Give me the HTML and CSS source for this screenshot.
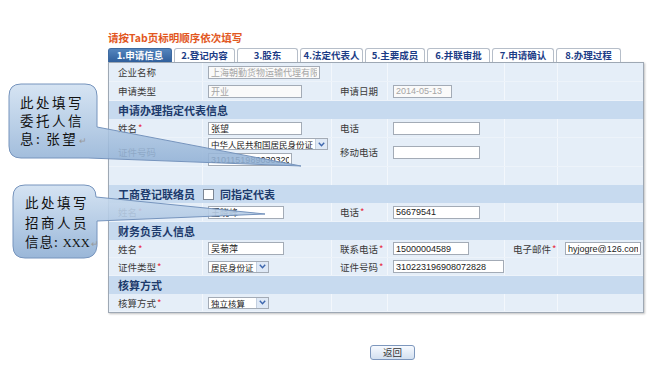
FILE: index.html
```html
<!DOCTYPE html>
<html>

<head>
    <meta charset="UTF-8">
    <meta name="viewport" content="width=device-width, initial-scale=1.0">
    <title>申请信息</title>
    <link rel="stylesheet" href="styles.css">
</head>

<body>

    <div class="page">
        <p class="tip">请按Tab页标明顺序依次填写</p>

        <div class="tabs">
            <a class="tab active w64">1.申请信息</a>
            <a class="tab w61">2.登记内容</a>
            <a class="tab w61">3.股东</a>
            <a class="tab w63">4.法定代表人</a>
            <a class="tab w60">5.主要成员</a>
            <a class="tab w63">6.并联审批</a>
            <a class="tab w62">7.申请确认</a>
            <a class="tab w65">8.办理过程</a>
        </div>

        <div class="panel">
            <div class="row">
                <div class="cell label">企业名称</div>
                <div class="cell"><input class="ipt w112 off" value="上海朝勤货物运输代理有限公司" disabled></div>
                <div class="cell"></div>
                <div class="cell"></div>
                <div class="cell"></div>
                <div class="cell"></div>
            </div>
            <div class="row">
                <div class="cell label">申请类型</div>
                <div class="cell"><input class="ipt w94 off" value="开业" disabled></div>
                <div class="cell label">申请日期</div>
                <div class="cell"><input class="ipt w59 off" value="2014-05-13" disabled></div>
                <div class="cell"></div>
                <div class="cell"></div>
            </div>

            <div class="head">申请办理指定代表信息</div>
            <div class="row">
                <div class="cell label">姓名<span class="req">*</span></div>
                <div class="cell"><input class="ipt w94" value="张望"></div>
                <div class="cell label">电话</div>
                <div class="cell"><input class="ipt w87" value=""></div>
                <div class="cell"></div>
                <div class="cell"></div>
            </div>
            <div class="row tall">
                <div class="cell label">证件号码</div>
                <div class="cell stack">
                    <div class="select w120 small"><span class="val">中华人民共和国居民身份证</span><span class="arrow"><svg width="7" height="5" viewBox="0 0 7 5"><path d="M0.8 0.8 L3.5 3.8 L6.2 0.8" fill="none" stroke="#3d66ad" stroke-width="1.4"/></svg></span></div>
                    <input class="ipt w84" value="310115198903032008">
                </div>
                <div class="cell label">移动电话</div>
                <div class="cell"><input class="ipt w87" value=""></div>
                <div class="cell"></div>
                <div class="cell"></div>
            </div>
            <div class="row gap">
                <div class="cell"></div>
                <div class="cell"></div>
                <div class="cell"></div>
                <div class="cell"></div>
                <div class="cell"></div>
                <div class="cell"></div>
            </div>

            <div class="head">工商登记联络员 <span class="check"></span> 同指定代表</div>
            <div class="row">
                <div class="cell label">姓名<span class="req">*</span></div>
                <div class="cell"><input class="ipt w76" value="王晓峰"></div>
                <div class="cell label">电话<span class="req">*</span></div>
                <div class="cell"><input class="ipt w87" value="56679541"></div>
                <div class="cell"></div>
                <div class="cell"></div>
            </div>

            <div class="head">财务负责人信息</div>
            <div class="row short">
                <div class="cell label">姓名<span class="req">*</span></div>
                <div class="cell"><input class="ipt w76" value="吴菊萍"></div>
                <div class="cell label">联系电话<span class="req">*</span></div>
                <div class="cell"><input class="ipt w76" value="15000004589"></div>
                <div class="cell label">电子邮件<span class="req">*</span></div>
                <div class="cell last"><input class="ipt w76" value="hyjogre@126.com"></div>
            </div>
            <div class="row short">
                <div class="cell label">证件类型<span class="req">*</span></div>
                <div class="cell">
                    <div class="select w61 small"><span class="val">居民身份证</span><span class="arrow"><svg width="7" height="5" viewBox="0 0 7 5"><path d="M0.8 0.8 L3.5 3.8 L6.2 0.8" fill="none" stroke="#3d66ad" stroke-width="1.4"/></svg></span></div>
                </div>
                <div class="cell label">证件号码<span class="req">*</span></div>
                <div class="cell"><input class="ipt w111" value="310223196908072828"></div>
                <div class="cell"></div>
                <div class="cell"></div>
            </div>

            <div class="head">核算方式</div>
            <div class="row short">
                <div class="cell label">核算方式<span class="req">*</span></div>
                <div class="cell">
                    <div class="select w61 small"><span class="val">独立核算</span><span class="arrow"><svg width="7" height="5" viewBox="0 0 7 5"><path d="M0.8 0.8 L3.5 3.8 L6.2 0.8" fill="none" stroke="#3d66ad" stroke-width="1.4"/></svg></span></div>
                </div>
                <div class="cell"></div>
                <div class="cell"></div>
                <div class="cell"></div>
                <div class="cell"></div>
            </div>
        </div>

        <div class="actions">
            <button class="btn">返回</button>
        </div>
    </div>

    <!-- callouts drawn over the form -->
    <svg class="callouts" width="650" height="371" viewBox="0 0 650 371">
        <defs>
            <linearGradient id="fill" x1="0" y1="0" x2="0" y2="1">
                <stop offset="0" stop-color="#d0e0f1"/>
                <stop offset="0.55" stop-color="#adc6e2"/>
                <stop offset="1" stop-color="#8fafd4"/>
            </linearGradient>
        </defs>
        <path d="M21 84 H85 Q97 84 97 96 V127 L301 166 L88 158 H21 Q9 158 9 146 V96 Q9 84 21 84 Z"
            fill="url(#fill)" fill-opacity="0.88" stroke="#7694bd" stroke-width="1"/>
        <path d="M25 185 H84 Q96 185 96 197 L265 214 L97 221 V246 Q96 258 84 258 H25 Q13 258 13 246 V197 Q13 185 25 185 Z"
            fill="url(#fill)" fill-opacity="0.9" stroke="#7694bd" stroke-width="1"/>
    </svg>

    <div class="note note1">此处填写<br>委托人信<br>息<span class="colon">:</span>张望<span class="mark">↵</span></div>
    <div class="note note2">此处填写<br>招商人员<br><span class="tight">信息<span class="colon">:</span></span><span class="xxx">XXX</span><span class="mark">↵</span></div>

</body>

</html>
```

FILE: styles.css
```css
body {
    margin: 0;
    background-color: #fff;
    font-family: "Liberation Sans", "Noto Sans CJK SC", sans-serif;
    position: relative;
    width: 650px;
    height: 371px;
    overflow: hidden;
}

.page {
    padding: 32px 0 0 108px;
}

.tip {
    margin: 0 0 4px 0;
    height: 12px;
    line-height: 12px;
    font-size: 10.5px;
    font-weight: bold;
    color: #e2571e;
    font-family: "Noto Sans CJK SC", sans-serif;
}

/* tabs */
.tabs {
    display: flex;
    gap: 2px;
    height: 14px;
}

.tab {
    display: block;
    box-sizing: border-box;
    height: 14px;
    line-height: 13px;
    text-align: center;
    font-size: 9.5px;
    font-weight: bold;
    color: #1c3c86;
    background-color: #fff;
    border: 1px solid #b6bec9;
    border-bottom: none;
    border-radius: 3px 3px 0 0;
    font-family: "Noto Sans CJK SC", sans-serif;
}

.tab.active {
    color: #fff;
    background: linear-gradient(#5485bd, #2f5f9c);
    border-color: #3e6aa0;
}

.w60 { width: 60px; }
.w61 { width: 61px; }
.w62 { width: 62px; }
.w63 { width: 63px; }
.w64 { width: 64px; }
.w65 { width: 65px; }

/* form panel */
.panel {
    width: 536px;
    box-sizing: border-box;
    border: 1px solid #9ea8b4;
    background-color: #e5eef8;
    box-shadow: 1px 1px 2px rgba(0, 0, 0, 0.25);
}

.row {
    display: grid;
    grid-template-columns: 94px 129px 56px 117px 53px 85px;
    height: 19px;
    box-sizing: border-box;
    border-bottom: 1px solid #edf3fa;
}

.row.short {
    height: 18px;
}

.row.tall {
    height: 29px;
}

.row.gap {
    height: 18px;
    border-bottom: none;
}

.cell {
    display: flex;
    align-items: center;
    padding-left: 5px;
    border-right: 1px solid #f3f7fc;
    font-size: 9.5px;
    color: #3a3a3a;
    overflow: hidden;
    white-space: nowrap;
    font-family: "Noto Sans CJK SC", sans-serif;
}

.cell:last-child {
    border-right: none;
}

.cell.label {
    padding-left: 8px;
}

.row > .cell:first-child {
    padding-left: 9px;
}

.cell.last {
    padding-left: 7px;
}

.cell.stack {
    flex-direction: column;
    align-items: flex-start;
    justify-content: center;
    gap: 3px;
}

.req {
    color: #e8283a;
    margin-left: 1px;
}

.head {
    height: 18px;
    line-height: 18px;
    padding-left: 9px;
    background-color: #c7daef;
    font-size: 11px;
    font-weight: bold;
    color: #1d3a6c;
    font-family: "Noto Sans CJK SC", sans-serif;
    display: flex;
    align-items: center;
}

.check {
    display: inline-block;
    width: 9px;
    height: 9px;
    margin: 0 6px 0 8px;
    background-color: #fff;
    border: 1px solid #7c8694;
}

/* inputs */
.ipt {
    box-sizing: border-box;
    height: 13px;
    padding: 0 2px;
    margin: 0;
    border: 1px solid #a3abb6;
    background-color: #fff;
    font-size: 9px;
    color: #222;
    font-family: "Liberation Sans", "Noto Sans CJK SC", sans-serif;
    outline: none;
}

.ipt.off {
    color: #a5a5a5;
    background-color: #fafafa;
}

.w59 { width: 59px; }
.w76 { width: 76px; }
.w84 { width: 84px; }
.w87 { width: 87px; }
.w94 { width: 94px; }
.w111 { width: 111px; }
.w112 { width: 112px; }
.w120 { width: 120px; }

.select {
    display: flex;
    box-sizing: border-box;
    height: 12px;
    border: 1px solid #a3abb6;
    background-color: #fff;
    font-size: 9px;
    color: #222;
}

.select.small {
    font-size: 8.5px;
}

.select .val {
    flex: 1;
    padding-left: 2px;
    line-height: 10px;
    overflow: hidden;
}

.select .arrow {
    width: 11px;
    display: flex;
    align-items: center;
    justify-content: center;
    background-color: #dfe9f6;
    border-left: 1px solid #c3cfdf;
}

/* bottom button */
.actions {
    padding: 29px 0 0 262px;
}

.btn {
    width: 45px;
    height: 15px;
    padding: 0;
    border: 1px solid #7d97bd;
    border-radius: 3px;
    background: linear-gradient(#f7faff, #d3e0f0);
    font-size: 9.5px;
    line-height: 13px;
    color: #333;
    font-family: "Noto Sans CJK SC", sans-serif;
    cursor: pointer;
}

/* callouts */
.callouts {
    position: absolute;
    left: 0;
    top: 0;
    pointer-events: none;
}

.note {
    position: absolute;
    font-size: 13.5px;
    letter-spacing: 2.5px;
    color: #111;
    font-family: "Noto Sans CJK SC", sans-serif;
}

.note1 {
    left: 20px;
    top: 93px;
    line-height: 18px;
}

.note2 {
    left: 25px;
    top: 193px;
    line-height: 19.5px;
}

.colon {
    margin-right: 4px;
}

.tight {
    letter-spacing: 1px;
}

.xxx {
    font-family: "Liberation Serif", serif;
    font-size: 12.5px;
    letter-spacing: 0;
}

.mark {
    font-size: 9px;
    color: #999;
    letter-spacing: 0;
    margin-left: 1px;
}
```
